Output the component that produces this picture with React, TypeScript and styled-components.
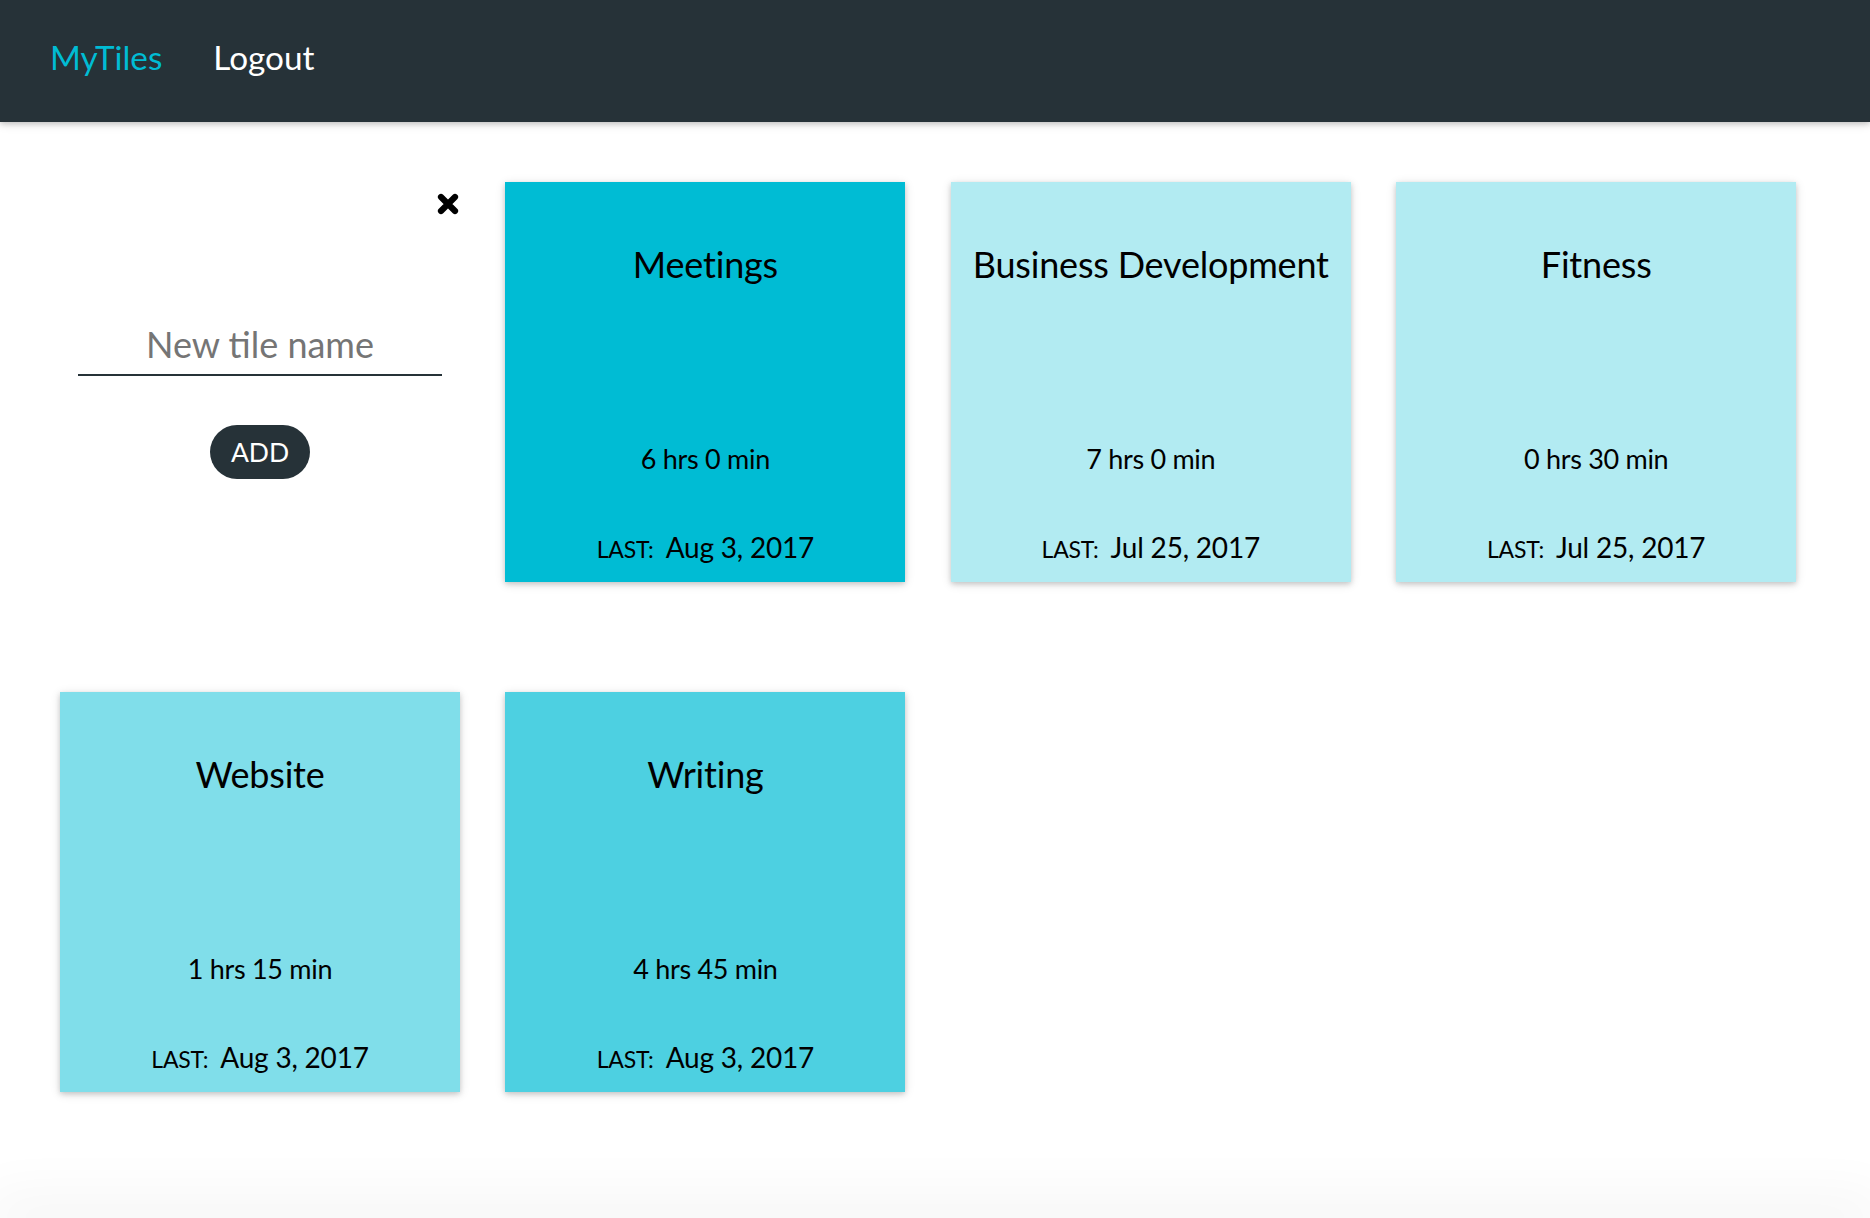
import * as React from 'react';
import styled, { createGlobalStyle } from 'styled-components';

const GlobalStyle = createGlobalStyle`
	html,
	body {
		margin: 0;
		padding: 0;
		background: #ffffff;
		overflow: hidden;
	}

	body {
		font-family: Lato, 'Open Sans', sans-serif;
		color: #000000;
		-webkit-font-smoothing: antialiased;
	}

	* {
		box-sizing: border-box;
	}
`;

const Page = styled.div`
	display: flex;
	flex-direction: column;
	height: 100vh;
	overflow: hidden;
`;

const Navbar = styled.nav`
	display: flex;
	align-items: flex-start;
	gap: 51px;
	flex-shrink: 0;
	height: 122px;
	padding: 38px 0 0 50px;
	background: #263238;
	box-shadow: 0 2px 5px rgba(0, 0, 0, 0.16), 0 2px 10px rgba(0, 0, 0, 0.12);
	position: relative;
	z-index: 2;
`;

const NavLink = styled.a<{ $brand?: boolean }>`
	font-size: 33.3px;
	line-height: 1.2;
	color: ${(p) => (p.$brand ? '#00bcd4' : '#ffffff')};
	text-decoration: none;
	cursor: pointer;
`;

const Main = styled.main`
	flex: 1;
	padding: 60px 0 0 60px;
`;

const Grid = styled.div`
	display: grid;
	grid-template-columns: repeat(4, 400px);
	grid-auto-rows: 400px;
	column-gap: 45.4px;
	row-gap: 110px;
`;

const NewTileForm = styled.form`
	display: flex;
	flex-direction: column;
	align-items: center;
	padding: 11px 18px 0;
`;

const CloseRow = styled.div`
	align-self: stretch;
	display: flex;
	justify-content: flex-end;
	margin-right: -17px;
`;

const CloseButton = styled.button`
	display: flex;
	padding: 0;
	border: none;
	background: none;
	cursor: pointer;
`;

const NameInput = styled.input`
	width: 100%;
	height: 56px;
	margin-top: 105px;
	padding: 0 0 6px;
	border: none;
	border-bottom: 2px solid #263238;
	outline: none;
	background: transparent;
	font-family: Lato, sans-serif;
	font-size: 36px;
	line-height: 1.2;
	text-align: center;
	color: #263238;

	&::placeholder {
		color: #757575;
	}
`;

const AddButton = styled.button`
	width: 100px;
	height: 54px;
	margin-top: 49px;
	border: none;
	border-radius: 27px;
	background: #263238;
	color: #ffffff;
	font-family: Lato, sans-serif;
	font-size: 26.5px;
	text-transform: uppercase;
	cursor: pointer;
`;

const Tile = styled.div<{ $color: string }>`
	display: flex;
	flex-direction: column;
	align-items: center;
	padding: 61px 12px 17px;
	background: ${(p) => p.$color};
	box-shadow: 0 2px 5px rgba(0, 0, 0, 0.16), 0 2px 10px rgba(0, 0, 0, 0.12);
	text-align: center;
	cursor: pointer;
`;

const TileTitle = styled.h2`
	margin: 0;
	font-size: 36px;
	font-weight: 400;
	line-height: 1.2;
	letter-spacing: -0.2px;
	white-space: nowrap;
`;

const TileTime = styled.div`
	margin-top: auto;
	font-size: 27px;
	line-height: 1.2;
	letter-spacing: -0.3px;
`;

const TileLast = styled.div`
	margin-top: 56px;
	font-size: 28px;
	line-height: 1.2;
	letter-spacing: -0.2px;
	white-space: nowrap;

	.label {
		font-size: 23px;
		margin-right: 12px;
	}
`;

const Footer = styled.footer`
	flex-shrink: 0;
	height: 0;
	box-shadow: 0 0 60px 14px rgba(0, 0, 0, 0.07);
`;

const CloseIcon = () => (
	<svg width="22" height="22" viewBox="0 0 22 22">
		<path
			d="M4 4 L18 18 M18 4 L4 18"
			stroke="#000000"
			strokeWidth="6.2"
			strokeLinecap="round"
			fill="none"
		/>
	</svg>
);

type TileData = {
	id: number;
	name: string;
	hours: number;
	minutes: number;
	last: string;
	color: string;
};

const tiles: TileData[] = [
	{ id: 1, name: 'Meetings', hours: 6, minutes: 0, last: 'Aug 3, 2017', color: '#00bcd4' },
	{ id: 2, name: 'Business Development', hours: 7, minutes: 0, last: 'Jul 25, 2017', color: '#b2ebf2' },
	{ id: 3, name: 'Fitness', hours: 0, minutes: 30, last: 'Jul 25, 2017', color: '#b2ebf2' },
	{ id: 4, name: 'Website', hours: 1, minutes: 15, last: 'Aug 3, 2017', color: '#80deea' },
	{ id: 5, name: 'Writing', hours: 4, minutes: 45, last: 'Aug 3, 2017', color: '#4dd0e1' },
];

export default function App() {
	const [name, setName] = React.useState('');

	return (
		<Page>
			<GlobalStyle />
			<Navbar>
				<NavLink $brand>MyTiles</NavLink>
				<NavLink>Logout</NavLink>
			</Navbar>
			<Main>
				<Grid>
					<NewTileForm onSubmit={(e) => e.preventDefault()}>
						<CloseRow>
							<CloseButton type="button" aria-label="close">
								<CloseIcon />
							</CloseButton>
						</CloseRow>
						<NameInput
							placeholder="New tile name"
							value={name}
							onChange={(e) => setName(e.target.value)}
						/>
						<AddButton type="submit">Add</AddButton>
					</NewTileForm>
					{tiles.map((tile) => (
						<Tile key={tile.id} $color={tile.color}>
							<TileTitle>{tile.name}</TileTitle>
							<TileTime>
								{tile.hours} hrs {tile.minutes} min
							</TileTime>
							<TileLast>
								<span className="label">LAST:</span>
								{tile.last}
							</TileLast>
						</Tile>
					))}
				</Grid>
			</Main>
			<Footer />
		</Page>
	);
}
